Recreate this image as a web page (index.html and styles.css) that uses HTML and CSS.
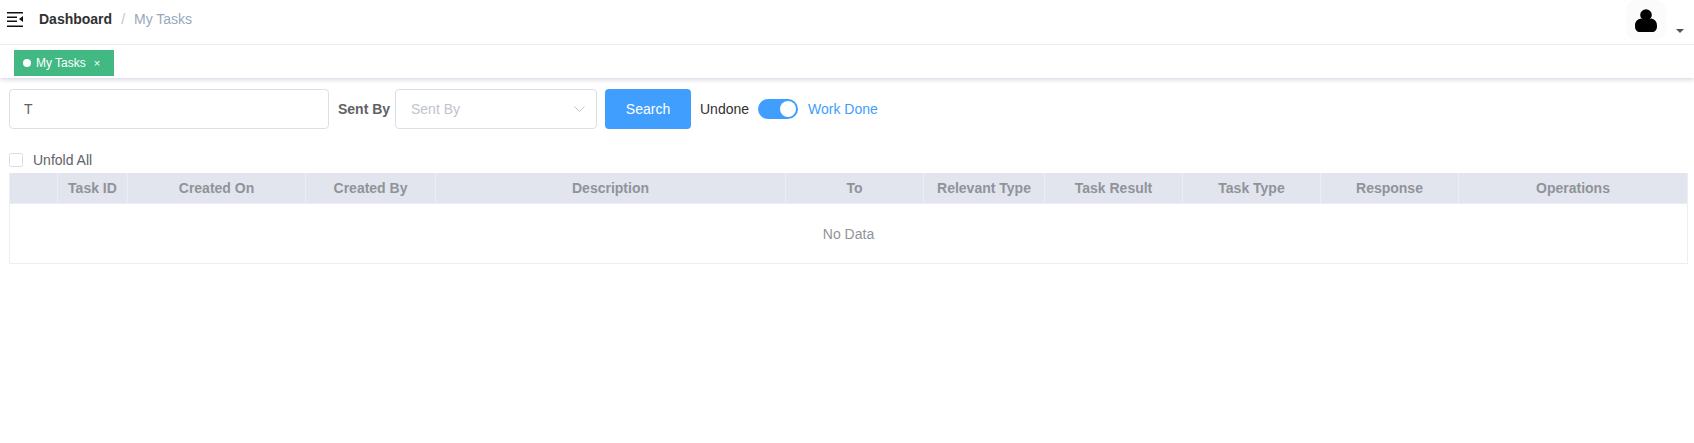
FILE: index.html
```html
<!DOCTYPE html>
<html lang="en">
<head>
    <meta charset="UTF-8">
    <title>My Tasks</title>
    <link rel="stylesheet" href="styles.css">
</head>
<body>
    <header class="navbar">
        <svg class="hamburger" width="16" height="15" viewBox="0 0 16 15">
            <path d="M0 0h16v1.500H0zM0 4.500h10v1.500H0zM0 8.500h10v1.500H0zM0 13.500h16v1.500H0z" fill="#111"/>
            <path d="M16 4v6l-4-3z" fill="#111"/>
        </svg>
        <nav class="crumbs">
            <span class="crumb-main">Dashboard</span>
            <span class="crumb-sep">/</span>
            <span class="crumb-last">My Tasks</span>
        </nav>
        <div class="avatar-wrap">
            <div class="avatar">
                <svg width="22" height="23" viewBox="0 0 22 23">
                    <circle cx="11" cy="6" r="5.800" fill="#000"/>
                    <path d="M0 17c0-4.500 2-6.500 5.500-7.500 3 1.500 8 1.500 11 0 3.500 1 5.500 3 5.500 7.500 0 4-2 6-5 6H5c-3 0-5-2-5-6z" fill="#000"/>
                </svg>
            </div>
            <span class="caret"></span>
        </div>
    </header>

    <div class="tags">
        <div class="tag">
            <span class="tag-dot"></span>
            <span>My Tasks</span>
            <span class="tag-close">×</span>
        </div>
    </div>

    <main class="content">
        <form class="filters">
            <input class="input keyword" type="text" value="T">
            <label class="filter-label">Sent By</label>
            <div class="input select">
                <span>Sent By</span>
                <svg width="11" height="6" viewBox="0 0 11 6"><path d="M0.500 0.500l5 5 5-5" fill="none" stroke="#c0c4cc" stroke-width="1"/></svg>
            </div>
            <button class="search-btn" type="button">Search</button>
            <span class="switch-off">Undone</span>
            <span class="switch"><span class="knob"></span></span>
            <span class="switch-on">Work Done</span>
        </form>

        <label class="unfold"><span class="checkbox"></span>Unfold All</label>

        <table class="tasks">
            <colgroup>
                <col class="c48"><col class="c70"><col class="c178"><col class="c130"><col class="c350"><col class="c138"><col class="c121"><col class="c138"><col class="c138"><col class="c138"><col>
            </colgroup>
            <thead>
                <tr>
                    <th></th>
                    <th>Task ID</th>
                    <th>Created On</th>
                    <th>Created By</th>
                    <th>Description</th>
                    <th>To</th>
                    <th>Relevant Type</th>
                    <th>Task Result</th>
                    <th>Task Type</th>
                    <th>Response</th>
                    <th>Operations</th>
                </tr>
            </thead>
            <tbody>
                <tr><td class="empty" colspan="11">No Data</td></tr>
            </tbody>
        </table>
    </main>
</body>
</html>
```

FILE: styles.css
```css
*{
    box-sizing: border-box;
}
body{
    margin: 0;
    background-color: #fff;
    font-family: "Liberation Sans", Arial, sans-serif;
    font-size: 14px;
    color: #606266;
    overflow: hidden;
}
.navbar{
    height: 45px;
    display: flex;
    align-items: center;
    padding: 0 10px 6px 7px;
    border-bottom: 1px solid #f0f1f4;
}
.hamburger{
    flex: none;
    margin-right: 16px;
}
.crumbs{
    display: flex;
    gap: 9px;
    font-size: 14px;
}
.crumb-main{
    font-weight: bold;
    color: #303133;
}
.crumb-sep{
    color: #c0c4cc;
}
.crumb-last{
    color: #97a8be;
}
.avatar-wrap{
    margin-left: auto;
    align-self: flex-start;
    display: flex;
    align-items: flex-end;
    gap: 10px;
}
.avatar{
    width: 40px;
    height: 40px;
    border-radius: 10px;
    background-color: #fbfbfb;
    display: flex;
    align-items: center;
    justify-content: center;
}
.caret{
    width: 0;
    height: 0;
    margin-bottom: 7px;
    border-left: 4px solid transparent;
    border-right: 4px solid transparent;
    border-top: 4px solid #4a5464;
}
.tags{
    height: 33px;
    padding: 5px 14px 0;
    box-shadow: 0 2px 4px 0 rgba(70,70,130,.2);
}
.tag{
    width: 100px;
    height: 26px;
    display: flex;
    align-items: center;
    padding-left: 9px;
    background-color: #42b983;
    color: #fff;
    font-size: 12px;
}
.tag-dot{
    width: 8px;
    height: 8px;
    border-radius: 50%;
    background-color: #fff;
    margin-right: 5px;
}
.tag-close{
    margin-left: 8px;
    font-size: 11px;
}
.content{
    padding: 11px 6px 0 9px;
}
.filters{
    display: flex;
    align-items: center;
    height: 40px;
}
.input{
    height: 40px;
    border: 1px solid #dcdfe6;
    border-radius: 4px;
    font-family: inherit;
    font-size: 14px;
    color: #606266;
    padding: 0 15px;
    background-color: #fff;
}
.keyword{
    width: 320px;
    padding-left: 14px;
}
.filter-label{
    margin: 0 5px 0 9px;
    font-weight: bold;
    width: 52px;
    white-space: nowrap;
}
.select{
    width: 202px;
    display: flex;
    align-items: center;
    justify-content: space-between;
    color: #c0c4cc;
    padding-right: 11px;
}
.search-btn{
    width: 86px;
    height: 40px;
    margin-left: 8px;
    border: none;
    border-radius: 4px;
    background-color: #409eff;
    color: #fff;
    font-family: inherit;
    font-size: 14px;
}
.switch-off{
    margin-left: 9px;
    color: #303133;
}
.switch{
    width: 40px;
    height: 20px;
    margin: 0 10px 0 9px;
    border-radius: 10px;
    background-color: #409eff;
    display: flex;
    justify-content: flex-end;
    align-items: center;
    padding-right: 2px;
}
.knob{
    width: 16px;
    height: 16px;
    border-radius: 50%;
    background-color: #fff;
}
.switch-on{
    color: #409eff;
}
.unfold{
    display: flex;
    align-items: center;
    height: 16px;
    margin-top: 23px;
}
.checkbox{
    width: 14px;
    height: 14px;
    margin-right: 10px;
    border: 1px solid #dcdfe6;
    border-radius: 2px;
}
.tasks{
    width: 1679px;
    margin-top: 5px;
    border-collapse: separate;
    border-spacing: 0;
    table-layout: fixed;
    font-size: 14px;
    border-left: 1px solid #ebeef5;
    border-right: 1px solid #ebeef5;
}
.c48{ width: 48px; }
.c70{ width: 70px; }
.c178{ width: 178px; }
.c130{ width: 130px; }
.c350{ width: 350px; }
.c138{ width: 138px; }
.c121{ width: 121px; }
th{
    height: 31px;
    padding: 0;
    background-color: #e2e5ee;
    color: #909399;
    font-weight: bold;
    text-align: center;
    border-right: 1px solid #ebeef5;
    border-bottom: 1px solid #ebeef5;
}
th:last-child{
    border-right: none;
}
.empty{
    height: 60px;
    text-align: center;
    color: #909399;
    border-bottom: 1px solid #ebeef5;
}
```
